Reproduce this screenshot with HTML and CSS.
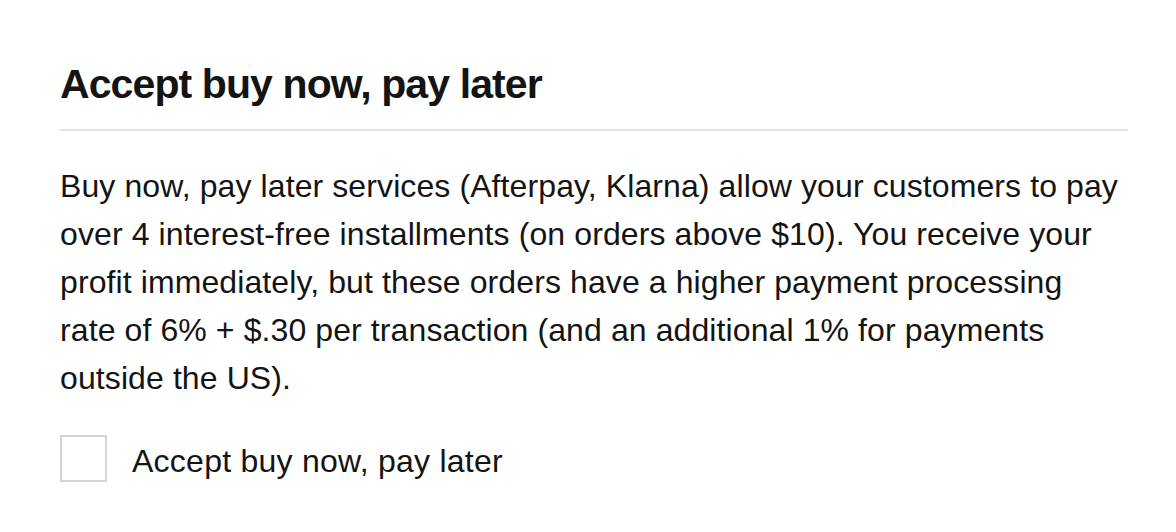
FILE: index.html
```html
<!DOCTYPE html>
<html lang="en">
<head>
    <meta charset="UTF-8">
    <title>Accept buy now, pay later</title>
    <link rel="stylesheet" href="styles.css">
</head>
<body>
    <div class="panel">
        <h2 class="panel-title">Accept buy now, pay later</h2>
        <p class="panel-text">Buy now, pay later services (Afterpay, Klarna) allow your customers to pay over 4 interest-free installments (on orders above $10). You receive your profit immediately, but these orders have a higher payment processing rate of 6% + $.30 per transaction (and an additional 1% for payments outside the US).</p>
        <label class="check-row">
            <input type="checkbox" class="check-box">
            <span class="check-label">Accept buy now, pay later</span>
        </label>
    </div>
</body>
</html>
```

FILE: styles.css
```css
body {
    margin: 0;
    background: #ffffff;
    font-family: "Liberation Sans", Arial, sans-serif;
    color: #141414;
}
.panel {
    width: 1068px;
    padding: 58px 48px 0 60px;
}
.panel-title {
    margin: 0;
    font-size: 41px;
    font-weight: 700;
    letter-spacing: -0.9px;
    line-height: 52px;
    padding-bottom: 19px;
    border-bottom: 2px solid #e3e3e3;
}
.panel-text {
    max-width: 1060px;
    margin: 31px 0 0;
    font-size: 32px;
    letter-spacing: 0.1px;
    line-height: 48px;
}
.check-row {
    display: flex;
    align-items: center;
    gap: 25px;
    margin-top: 33px;
    font-size: 32px;
    letter-spacing: 0.25px;
}
.check-label {
    padding-top: 5px;
}
.check-box {
    appearance: none;
    margin: 0;
    width: 47px;
    height: 47px;
    border: 2px solid #d4d4d4;
    box-sizing: border-box;
}
```
